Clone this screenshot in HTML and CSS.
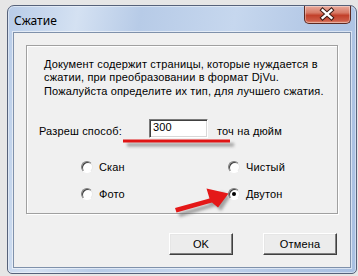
FILE: index.html
```html
<!DOCTYPE html>
<html lang="ru">
<head>
<meta charset="utf-8">
<title>Сжатие</title>
<link rel="stylesheet" href="styles.css">
</head>
<body>
<div class="window">
  <div class="titlebar">
    <span class="title">Сжатие</span>
    <button class="close" aria-label="Закрыть">
      <svg width="47" height="18" viewBox="0 0 47 18">
        <path d="M19 5 L28 13 M28 5 L19 13" stroke="#3a1a14" stroke-width="4.4" stroke-linecap="square" fill="none"/>
        <path d="M19 5 L28 13 M28 5 L19 13" stroke="#ffffff" stroke-width="2.4" stroke-linecap="square" fill="none"/>
      </svg>
    </button>
  </div>
  <div class="client">
    <div class="group">
      <p class="desc">Документ содержит страницы, которые нуждается в<br>сжатии, при преобразовании в формат DjVu.<br>Пожалуйста определите их тип, для лучшего сжатия.</p>
      <div class="res-row">
        <span class="label">Разреш способ:</span>
        <span class="input">300</span>
        <span class="unit">точ на дюйм</span>
      </div>
      <div class="radios">
        <label class="radio"><span class="dot"></span>Скан</label>
        <label class="radio"><span class="dot"></span>Чистый</label>
        <label class="radio"><span class="dot"></span>Фото</label>
        <label class="radio"><span class="dot checked"></span>Двутон</label>
      </div>
    </div>
    <div class="buttons">
      <button class="btn btn-ok">OK</button>
      <button class="btn btn-cancel">Отмена</button>
    </div>
  </div>
</div>
<svg class="annot" width="358" height="276" viewBox="0 0 358 276">
  <defs>
    <filter id="sh" x="-20%" y="-50%" width="140%" height="200%">
      <feGaussianBlur stdDeviation="1.4"/>
    </filter>
  </defs>
  <g fill="#606060" opacity="0.55" filter="url(#sh)">
    <rect x="127" y="143" width="107" height="3.5"/>
    <path d="M178 213 L210 204 L208 200 L222 192 L230 197 L221 211 L216 206 L180 217 Z"/>
  </g>
  <rect x="123" y="139.5" width="107" height="3" fill="#e01414"/>
  <path d="M175 208 L209.5 198.5 L206.5 188.5 L228.5 193.5 L218 207.5 L212 202.5 L176.5 212.5 Z" fill="#e41818"/>
</svg>
</body>
</html>
```
FILE: styles.css
```css
html, body {
  margin: 0;
  padding: 0;
}
body {
  width: 358px;
  height: 276px;
  background: #e6e6e6;
  position: relative;
  overflow: hidden;
  font-family: "Liberation Sans", Arial, sans-serif;
  font-size: 11px;
  color: #000;
}
.window {
  box-sizing: border-box;
  margin: 5px 0 0 7px;
  width: 350px;
  height: 269px;
  border: 1px solid #56627a;
  border-radius: 7px 7px 5px 5px;
  background: linear-gradient(100deg, #b8cce8 0%, #d4e1f2 18%, #b7cbe7 34%, #c6d7ee 58%, #b2c7e5 80%, #a9c0e2 100%);
  box-shadow: inset 0 0 0 1px rgba(255,255,255,0.45);
  display: flex;
  flex-direction: column;
}
.titlebar {
  height: 26px;
  display: flex;
  align-items: flex-start;
  justify-content: space-between;
}
.title {
  font-family: "Noto Sans", "Open Sans", sans-serif;
  font-size: 12px;
  line-height: 16px;
  color: #000;
  padding: 7px 0 0 6px;
}
.close {
  width: 47px;
  height: 18px;
  margin: 0 5px 0 0;
  padding: 0;
  border: 1px solid #5c2a22;
  border-top: none;
  border-radius: 0 0 5px 5px;
  background: linear-gradient(180deg, #e9a99b 0%, #d77a66 40%, #c2402a 55%, #cc5a45 85%, #e08a72 100%);
  box-shadow: inset 0 0 0 1px rgba(255,255,255,0.35);
  display: flex;
}
.close svg {
  display: block;
  margin: -1px 0 0 -1px;
}
.client {
  flex: 1;
  margin: 0 5px 5px 5px;
  border: 1px solid #7f91ab;
  background: #f0f0f0;
  padding: 12px 12px 0 12px;
  display: flex;
  flex-direction: column;
  box-shadow: 0 0 0 1px rgba(255,255,255,0.55);
  letter-spacing: 0.15px;
}
.group {
  height: 169px;
  box-sizing: border-box;
  border: 1px solid #a0a0a0;
  box-shadow: inset 1px 1px 0 #ffffff, 1px 1px 0 #ffffff;
  padding: 12px 0 0 0;
}
.desc {
  margin: 0 0 0 17px;
  line-height: 13.3px;
  white-space: nowrap;
}
.res-row {
  display: flex;
  align-items: flex-start;
  margin: 21px 0 0 12px;
  height: 19px;
}
.label {
  width: 110px;
  padding-top: 6px;
  line-height: 13px;
}
.input {
  box-sizing: border-box;
  width: 59px;
  height: 19px;
  background: #fff;
  border: 1px solid;
  border-color: #7a7a7a #ffffff #ffffff #7a7a7a;
  box-shadow: inset 1px 1px 0 #404040, inset -1px -1px 0 #d8d8d8;
  padding: 1px 3px 0 3px;
  line-height: 13px;
}
.unit {
  margin-left: 9px;
  padding-top: 6px;
  line-height: 13px;
}
.radios {
  display: grid;
  grid-template-columns: 147px 100px;
  grid-auto-rows: 27px;
  margin: 16px 0 0 54px;
}
.radio {
  display: flex;
  align-items: center;
  gap: 6px;
  line-height: 13px;
}
.dot {
  box-sizing: border-box;
  width: 12px;
  height: 12px;
  border-radius: 50%;
  background: #fff;
  border: 1px solid;
  border-color: #808080 #e8e8e8 #ffffff #808080;
  box-shadow: inset 1px 1px 0 #404040;
  position: relative;
}
.dot.checked::after {
  content: "";
  position: absolute;
  left: 3px;
  top: 3px;
  width: 4px;
  height: 4px;
  border-radius: 50%;
  background: #000;
}
.buttons {
  display: flex;
  justify-content: flex-end;
  gap: 30px;
  margin: 19px 1px 0 0;
}
.btn {
  box-sizing: border-box;
  height: 22px;
  padding: 0;
  font-family: "Liberation Sans", Arial, sans-serif;
  font-size: 11px;
  letter-spacing: 0.15px;
  color: #000;
  background: #ececec;
  border: 1px solid;
  border-color: #ffffff #404040 #404040 #ffffff;
  box-shadow: inset -1px -1px 0 #808080, inset 1px 1px 0 #e6e6e6;
}
.btn-ok {
  width: 64px;
}
.btn-cancel {
  width: 74px;
}
.annot {
  position: absolute;
  left: 0;
  top: 0;
  pointer-events: none;
}
```
